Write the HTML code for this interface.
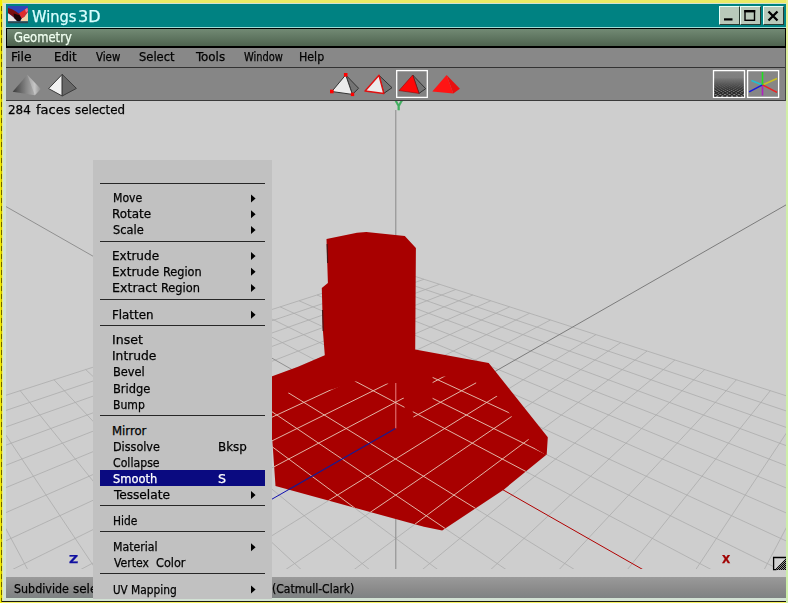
<!DOCTYPE html>
<html><head><meta charset="utf-8"><title>Wings 3D</title>
<style>
html,body{margin:0;padding:0}
body{width:788px;height:603px;overflow:hidden;position:relative;background:#f0f070;font-family:'DejaVu Sans Condensed','DejaVu Sans','Liberation Sans',sans-serif;font-size:13px;color:#000}
div,span,svg{position:absolute;box-sizing:border-box}
.g{left:0;top:0;width:0;height:0}
.t{-webkit-text-stroke:0.25px currentColor;white-space:nowrap;transform-origin:0 0;line-height:30px;height:30px}
#edgeL{left:0;top:0;width:2.4px;height:603px;background:#f6ee00}
#edgeLd{left:1.4px;top:6px;width:0.8px;height:596px;background:repeating-linear-gradient(#6b6400 0 5px,#c8c000 5px 8px)}
#edgeR{left:786px;top:0;width:2px;height:603px;background:linear-gradient(#eef08a 0,#e4f09a 30px,#d0eea8 120px,#cdeeaa)}
#edgeT{left:0;top:0;width:788px;height:2.5px;background:#eaeb66}
#edgeB{left:0;top:601.6px;width:788px;height:2px;background:#f4f060}
#frame{left:2.5px;top:2.5px;width:783.5px;height:598.5px;background:#d2e2d4}
#frameB{left:2px;top:600.6px;width:784px;height:1.2px;background:#1a1a10}
#title{left:6px;top:4px;width:780px;height:23px;background:#008282}
#titleline{left:6px;top:27px;width:780px;height:1px;background:#9fe0d8}
#geo{left:6px;top:28px;width:780px;height:19.5px;background:#000}
#geoin{left:1px;top:1px;width:778px;height:17px;background:linear-gradient(#728a74,#4e634f)}
#menubar{left:6px;top:47.5px;width:780px;height:19.5px;background:#888888}
#tbline{left:6px;top:67px;width:780px;height:1px;background:#333}
#toolbar{left:6px;top:68px;width:780px;height:32px;background:#868686}
#tbline2{left:6px;top:100px;width:780px;height:1px;background:#3a3a3a}
#redge{left:785px;top:47.5px;width:1px;height:53px;background:#444}
#viewport{left:6px;top:101px;width:780px;height:476px;background:#cecece}
#status{left:6px;top:577px;width:780px;height:21px;background:linear-gradient(#9a9a9a,#8a8a8a 60%,#7e8283)}
#popup{left:93px;top:160px;width:179px;height:439px;background:#c1c1c1;z-index:2}
.z3{z-index:3}
.t{z-index:4}
.u{z-index:1}
.sep{z-index:3;left:100px;width:164.5px;height:1.2px;background:#262626}
#hl{z-index:3;left:100px;top:469.5px;width:164.5px;height:16.5px;background:#0a0a80}
.btn{top:6px;height:18.5px;background:#b9c9ba;border-top:1.5px solid #e8fff8;border-left:1.5px solid #e8fff8;border-bottom:1.5px solid #2a3a30;border-right:1.5px solid #2a3a30}
.scene{left:0;top:0}
.wbox{border:1.3px solid #fff;top:70px;height:28px}
</style></head><body>

<div id="edgeT"></div><div id="edgeB"></div><div id="edgeL"></div><div id="edgeLd"></div><div id="edgeR"></div>
<div id="frame"></div><div id="frameB"></div>
<div id="title"></div><div id="titleline"></div>
<div id="geo"><div id="geoin"></div></div>
<div id="menubar"></div><div id="tbline"></div><div id="toolbar"></div><div id="tbline2"></div>
<div id="viewport"></div><div id="redge"></div>
<svg class="scene" width="788" height="603" viewBox="0 0 788 603">
<defs><clipPath id="vp"><rect x="6" y="101" width="780" height="468"/></clipPath><clipPath id="redclip"><polygon points="326.5,239.0 357.0,232.7 366.3,232.0 404.8,235.9 415.9,247.9 415.2,349.6 488.7,363.0 547.8,437.3 546.7,454.4 504.0,489.4 442.2,530.6 423.9,526.8 275.5,486.0 272.3,440.0 271.0,440.0 271.0,376.6 272.2,376.3 298.1,366.8 324.8,355.3 322.9,330.6 321.8,287.9 327.9,282.9"/></clipPath><clipPath id="wclip"><polygon points="271.0,403.0 288.5,392.5 332.0,389.5 356.0,381.2 388.0,383.5 404.5,398.5 404.5,409.0 412.8,414.0 412.8,410.0 432.6,399.8 432.6,376.5 445.0,376.5 476.0,382.0 497.0,396.0 512.0,417.0 529.0,440.0 536.0,449.0 546.0,455.0 504.0,489.4 442.2,530.6 423.9,526.8 275.5,486.0 271.0,440.0"/></clipPath></defs>
<g clip-path="url(#vp)" fill="none">
<line x1="394.8" y1="269.9" x2="-97.1" y2="428.5" stroke="#acacac" stroke-width="0.8"/>
<line x1="394.8" y1="269.9" x2="887.9" y2="428.5" stroke="#acacac" stroke-width="0.8"/>
<line x1="409.0" y1="274.5" x2="-91.2" y2="443.2" stroke="#acacac" stroke-width="0.8"/>
<line x1="380.6" y1="274.5" x2="882.1" y2="443.2" stroke="#acacac" stroke-width="0.8"/>
<line x1="423.9" y1="279.3" x2="-84.9" y2="459.0" stroke="#acacac" stroke-width="0.8"/>
<line x1="365.8" y1="279.3" x2="875.9" y2="459.0" stroke="#acacac" stroke-width="0.8"/>
<line x1="439.4" y1="284.3" x2="-78.0" y2="476.3" stroke="#acacac" stroke-width="0.8"/>
<line x1="350.3" y1="284.3" x2="869.1" y2="476.3" stroke="#acacac" stroke-width="0.8"/>
<line x1="455.7" y1="289.5" x2="-70.5" y2="495.1" stroke="#acacac" stroke-width="0.8"/>
<line x1="334.0" y1="289.5" x2="861.8" y2="495.1" stroke="#acacac" stroke-width="0.8"/>
<line x1="472.8" y1="295.0" x2="-62.2" y2="515.7" stroke="#acacac" stroke-width="0.8"/>
<line x1="317.0" y1="295.0" x2="853.7" y2="515.7" stroke="#acacac" stroke-width="0.8"/>
<line x1="490.7" y1="300.8" x2="-53.1" y2="538.4" stroke="#acacac" stroke-width="0.8"/>
<line x1="299.1" y1="300.8" x2="844.7" y2="538.4" stroke="#acacac" stroke-width="0.8"/>
<line x1="509.6" y1="306.9" x2="-43.1" y2="563.5" stroke="#acacac" stroke-width="0.8"/>
<line x1="280.2" y1="306.9" x2="834.9" y2="563.5" stroke="#acacac" stroke-width="0.8"/>
<line x1="529.5" y1="313.3" x2="-31.9" y2="591.5" stroke="#acacac" stroke-width="0.8"/>
<line x1="260.4" y1="313.3" x2="823.9" y2="591.5" stroke="#acacac" stroke-width="0.8"/>
<line x1="550.4" y1="320.0" x2="-19.4" y2="622.7" stroke="#acacac" stroke-width="0.8"/>
<line x1="239.5" y1="320.0" x2="811.7" y2="622.7" stroke="#acacac" stroke-width="0.8"/>
<line x1="596.0" y1="334.6" x2="10.7" y2="697.8" stroke="#acacac" stroke-width="0.8"/>
<line x1="194.1" y1="334.6" x2="782.2" y2="697.8" stroke="#acacac" stroke-width="0.8"/>
<line x1="620.7" y1="342.6" x2="29.0" y2="743.5" stroke="#acacac" stroke-width="0.8"/>
<line x1="169.4" y1="342.6" x2="764.2" y2="743.5" stroke="#acacac" stroke-width="0.8"/>
<line x1="647.0" y1="351.1" x2="50.1" y2="796.3" stroke="#acacac" stroke-width="0.8"/>
<line x1="143.2" y1="351.1" x2="743.5" y2="796.3" stroke="#acacac" stroke-width="0.8"/>
<line x1="674.9" y1="360.0" x2="74.8" y2="858.0" stroke="#acacac" stroke-width="0.8"/>
<line x1="115.3" y1="360.0" x2="719.3" y2="858.0" stroke="#acacac" stroke-width="0.8"/>
<line x1="704.7" y1="369.6" x2="104.0" y2="931.0" stroke="#acacac" stroke-width="0.8"/>
<line x1="85.7" y1="369.6" x2="690.6" y2="931.0" stroke="#acacac" stroke-width="0.8"/>
<line x1="736.4" y1="379.8" x2="139.2" y2="1019.0" stroke="#acacac" stroke-width="0.8"/>
<line x1="54.0" y1="379.8" x2="656.1" y2="1019.0" stroke="#acacac" stroke-width="0.8"/>
<line x1="770.3" y1="390.7" x2="182.3" y2="1126.7" stroke="#acacac" stroke-width="0.8"/>
<line x1="20.2" y1="390.7" x2="613.8" y2="1126.7" stroke="#acacac" stroke-width="0.8"/>
<line x1="806.7" y1="402.4" x2="236.5" y2="1261.9" stroke="#acacac" stroke-width="0.8"/>
<line x1="-16.1" y1="402.4" x2="560.7" y2="1261.9" stroke="#acacac" stroke-width="0.8"/>
<line x1="845.8" y1="415.0" x2="306.4" y2="1436.6" stroke="#acacac" stroke-width="0.8"/>
<line x1="-55.1" y1="415.0" x2="492.2" y2="1436.6" stroke="#acacac" stroke-width="0.8"/>
<line x1="887.9" y1="428.5" x2="400.2" y2="1670.9" stroke="#acacac" stroke-width="0.8"/>
<line x1="-97.1" y1="428.5" x2="400.2" y2="1670.9" stroke="#acacac" stroke-width="0.8"/>
<line x1="395.4" y1="428.5" x2="-50.5" y2="174.4" stroke="#909090" stroke-width="1"/>
<line x1="395.4" y1="428.5" x2="839.3" y2="174.4" stroke="#7c7c7c" stroke-width="1"/>
<line x1="395.8" y1="110.0" x2="395.8" y2="569.0" stroke="#8a8a8a" stroke-width="1"/>
<line x1="395.4" y1="428.5" x2="644.5" y2="570.5" stroke="#b00000" stroke-width="1"/>
<line x1="395.4" y1="428.5" x2="-154.9" y2="743.5" stroke="#1010b0" stroke-width="1"/>
<polygon points="326.5,239.0 357.0,232.7 366.3,232.0 404.8,235.9 415.9,247.9 415.2,349.6 488.7,363.0 547.8,437.3 546.7,454.4 504.0,489.4 442.2,530.6 423.9,526.8 275.5,486.0 272.3,440.0 271.0,440.0 271.0,376.6 272.2,376.3 298.1,366.8 324.8,355.3 322.9,330.6 321.8,287.9 327.9,282.9" fill="#a80000"/>
<line x1="327.2" y1="244.0" x2="327.6" y2="263.0" stroke="#4a1414" stroke-width="1.2"/>
<line x1="322.6" y1="310.0" x2="323.2" y2="331.0" stroke="#4a1414" stroke-width="1.2"/>
<line x1="395.8" y1="383.0" x2="395.8" y2="428.4" stroke="#e88080" stroke-width="1"/>
<g clip-path="url(#wclip)">
<line x1="394.8" y1="269.9" x2="-97.1" y2="428.5" stroke="#e8c8b8" stroke-width="0.9"/>
<line x1="394.8" y1="269.9" x2="887.9" y2="428.5" stroke="#e8c8b8" stroke-width="0.9"/>
<line x1="409.0" y1="274.5" x2="-91.2" y2="443.2" stroke="#e8c8b8" stroke-width="0.9"/>
<line x1="380.6" y1="274.5" x2="882.1" y2="443.2" stroke="#e8c8b8" stroke-width="0.9"/>
<line x1="423.9" y1="279.3" x2="-84.9" y2="459.0" stroke="#e8c8b8" stroke-width="0.9"/>
<line x1="365.8" y1="279.3" x2="875.9" y2="459.0" stroke="#e8c8b8" stroke-width="0.9"/>
<line x1="439.4" y1="284.3" x2="-78.0" y2="476.3" stroke="#e8c8b8" stroke-width="0.9"/>
<line x1="350.3" y1="284.3" x2="869.1" y2="476.3" stroke="#e8c8b8" stroke-width="0.9"/>
<line x1="455.7" y1="289.5" x2="-70.5" y2="495.1" stroke="#e8c8b8" stroke-width="0.9"/>
<line x1="334.0" y1="289.5" x2="861.8" y2="495.1" stroke="#e8c8b8" stroke-width="0.9"/>
<line x1="472.8" y1="295.0" x2="-62.2" y2="515.7" stroke="#e8c8b8" stroke-width="0.9"/>
<line x1="317.0" y1="295.0" x2="853.7" y2="515.7" stroke="#e8c8b8" stroke-width="0.9"/>
<line x1="490.7" y1="300.8" x2="-53.1" y2="538.4" stroke="#e8c8b8" stroke-width="0.9"/>
<line x1="299.1" y1="300.8" x2="844.7" y2="538.4" stroke="#e8c8b8" stroke-width="0.9"/>
<line x1="509.6" y1="306.9" x2="-43.1" y2="563.5" stroke="#e8c8b8" stroke-width="0.9"/>
<line x1="280.2" y1="306.9" x2="834.9" y2="563.5" stroke="#e8c8b8" stroke-width="0.9"/>
<line x1="529.5" y1="313.3" x2="-31.9" y2="591.5" stroke="#e8c8b8" stroke-width="0.9"/>
<line x1="260.4" y1="313.3" x2="823.9" y2="591.5" stroke="#e8c8b8" stroke-width="0.9"/>
<line x1="550.4" y1="320.0" x2="-19.4" y2="622.7" stroke="#e8c8b8" stroke-width="0.9"/>
<line x1="239.5" y1="320.0" x2="811.7" y2="622.7" stroke="#e8c8b8" stroke-width="0.9"/>
<line x1="596.0" y1="334.6" x2="10.7" y2="697.8" stroke="#e8c8b8" stroke-width="0.9"/>
<line x1="194.1" y1="334.6" x2="782.2" y2="697.8" stroke="#e8c8b8" stroke-width="0.9"/>
<line x1="620.7" y1="342.6" x2="29.0" y2="743.5" stroke="#e8c8b8" stroke-width="0.9"/>
<line x1="169.4" y1="342.6" x2="764.2" y2="743.5" stroke="#e8c8b8" stroke-width="0.9"/>
<line x1="647.0" y1="351.1" x2="50.1" y2="796.3" stroke="#e8c8b8" stroke-width="0.9"/>
<line x1="143.2" y1="351.1" x2="743.5" y2="796.3" stroke="#e8c8b8" stroke-width="0.9"/>
<line x1="674.9" y1="360.0" x2="74.8" y2="858.0" stroke="#e8c8b8" stroke-width="0.9"/>
<line x1="115.3" y1="360.0" x2="719.3" y2="858.0" stroke="#e8c8b8" stroke-width="0.9"/>
<line x1="704.7" y1="369.6" x2="104.0" y2="931.0" stroke="#e8c8b8" stroke-width="0.9"/>
<line x1="85.7" y1="369.6" x2="690.6" y2="931.0" stroke="#e8c8b8" stroke-width="0.9"/>
<line x1="736.4" y1="379.8" x2="139.2" y2="1019.0" stroke="#e8c8b8" stroke-width="0.9"/>
<line x1="54.0" y1="379.8" x2="656.1" y2="1019.0" stroke="#e8c8b8" stroke-width="0.9"/>
<line x1="770.3" y1="390.7" x2="182.3" y2="1126.7" stroke="#e8c8b8" stroke-width="0.9"/>
<line x1="20.2" y1="390.7" x2="613.8" y2="1126.7" stroke="#e8c8b8" stroke-width="0.9"/>
<line x1="806.7" y1="402.4" x2="236.5" y2="1261.9" stroke="#e8c8b8" stroke-width="0.9"/>
<line x1="-16.1" y1="402.4" x2="560.7" y2="1261.9" stroke="#e8c8b8" stroke-width="0.9"/>
<line x1="845.8" y1="415.0" x2="306.4" y2="1436.6" stroke="#e8c8b8" stroke-width="0.9"/>
<line x1="-55.1" y1="415.0" x2="492.2" y2="1436.6" stroke="#e8c8b8" stroke-width="0.9"/>
<line x1="887.9" y1="428.5" x2="400.2" y2="1670.9" stroke="#e8c8b8" stroke-width="0.9"/>
<line x1="-97.1" y1="428.5" x2="400.2" y2="1670.9" stroke="#e8c8b8" stroke-width="0.9"/>
<line x1="476.2" y1="382.8" x2="413.4" y2="417.0" stroke="#e8c8b8" stroke-width="0.9"/>
<line x1="395.4" y1="428.5" x2="-154.9" y2="743.5" stroke="#1a1a90" stroke-width="1.2"/>
</g>
</g>
</svg>
<div id="status"></div>
<div id="popup"></div>
<div class="sep" style="top:182.65px"></div>
<div class="sep" style="top:240.65px"></div>
<div class="sep" style="top:298.65px"></div>
<div class="sep" style="top:324.90px"></div>
<div class="sep" style="top:414.90px"></div>
<div class="sep" style="top:504.90px"></div>
<div class="sep" style="top:530.65px"></div>
<div class="sep" style="top:572.90px"></div>
<div id="hl"></div>
<div class="btn" style="left:719px;width:20.5px"></div>
<div class="btn" style="left:740px;width:20.5px"></div>
<div class="btn" style="left:763px;width:20.5px"></div>
<svg class="scene" width="788" height="603" viewBox="0 0 788 603">
<defs>
<linearGradient id="pg1" x1="0" y1="0" x2="1" y2="0"><stop offset="0" stop-color="#444"/><stop offset="0.5" stop-color="#9c9c9c"/><stop offset="0.78" stop-color="#c6c6c6"/><stop offset="1" stop-color="#8a8a8a"/></linearGradient>
<linearGradient id="gg" x1="0" y1="0" x2="0" y2="1"><stop offset="0" stop-color="#848484"/><stop offset="0.3" stop-color="#7e7e7e"/><stop offset="1" stop-color="#888"/></linearGradient>
<pattern id="hatch" width="4.4" height="3.2" patternUnits="userSpaceOnUse"><path d="M0 0L4.4 3.2M4.4 0L0 3.2" stroke="#1c1c1c" stroke-width="0.95"/></pattern>
<linearGradient id="hm" x1="0" y1="0" x2="0" y2="1"><stop offset="0" stop-color="#fff" stop-opacity="0"/><stop offset="0.25" stop-color="#fff" stop-opacity="0"/><stop offset="0.8" stop-color="#fff" stop-opacity="1"/></linearGradient>
<clipPath id="gclip"><rect x="714.2" y="71.3" width="29.6" height="25.4"/></clipPath><mask id="hmask"><rect x="714" y="71" width="30" height="26" fill="url(#hm)"/></mask>
</defs>
<!-- app icon -->
<g>
<rect x="8" y="6" width="20" height="17.2" fill="#2f45b8"/>
<polygon points="8,13 12,16 16,19.5 18,21.5 8,21.5" fill="#ece4e4"/>
<polygon points="28,12 28,21.5 20,21.5 22,18 24.5,16.5" fill="#f2d4a8"/>
<polygon points="8,8 12,9.2 16,11.6 20,14.5 19.5,20.8 16,19.2 12,15.8 8,13" fill="#7c0c10"/>
<polygon points="13.5,13.5 19.5,15.3 22,17.5 20,21.3 17,21.3 14.5,18.3" fill="#1a0408"/>
<polygon points="19,13.2 27.2,8 28,11.5 24.2,17 21.5,18.2" fill="#e02c2c"/>
<polygon points="25,9.4 27.4,7.8 28,11 26,12.5" fill="#ee7090"/>
<rect x="8" y="21.3" width="20" height="1.9" fill="#2c4a4c"/>
</g>
<!-- min / max / close glyphs -->
<rect x="724" y="18.3" width="8.5" height="2.2" fill="#000"/>
<rect x="745" y="10.8" width="9.5" height="9.5" fill="none" stroke="#000" stroke-width="1.4"/><rect x="744.3" y="10" width="10.9" height="2.4" fill="#000"/>
<path d="M768.5 11.5L777.5 20.5M777.5 11.5L768.5 20.5" stroke="#000" stroke-width="2.3"/>
<!-- toolbar pyramids -->
<polygon points="27.3,74.7 40.9,88.9 34.9,95.2 12.7,91.8" fill="url(#pg1)"/>
<polygon points="27.3,74.7 34.9,95.2 12.7,91.8" fill="#000" fill-opacity="0.12"/>
<polygon points="62.2,74.4 48.6,88.6 62.2,96" fill="#f2f2f2" stroke="#3c3c3c" stroke-width="1" stroke-linejoin="round"/>
<polygon points="62.2,74.4 76.4,88.4 62.2,96" fill="#686868" stroke="#3c3c3c" stroke-width="1" stroke-linejoin="round"/>
<!-- vertex -->
<polygon points="345.7,74.9 358.6,88.3 352.4,94.4" fill="#747474" stroke="#333" stroke-width="1" stroke-linejoin="round"/>
<polygon points="345.7,74.9 331.8,91.5 352.4,94.4" fill="#ebebeb" stroke="#333" stroke-width="1" stroke-linejoin="round"/>
<rect x="343.9" y="73" width="3.6" height="3.6" fill="#f00"/><rect x="330" y="89.7" width="3.6" height="3.6" fill="#f00"/><rect x="350.8" y="92.7" width="3.4" height="3.4" fill="#f00"/>
<!-- edge -->
<polygon points="379,75.3 392,87.7 383.8,93.4" fill="#747474" stroke="#333" stroke-width="1" stroke-linejoin="round"/>
<polygon points="379,75.3 365.1,91.1 383.8,93.4" fill="#ebebeb" stroke="#e01010" stroke-width="1.5" stroke-linejoin="round"/>
<!-- face -->
<rect x="396.7" y="70.6" width="30.6" height="26.8" fill="#828282" stroke="#fff" stroke-width="1.3"/>
<polygon points="412.7,75 425.7,88.7 419,93.4" fill="#747474" stroke="#333" stroke-width="1" stroke-linejoin="round"/>
<polygon points="412.7,75 399,90.6 419,93.4" fill="#ff0808" stroke="#801010" stroke-width="0.6" stroke-linejoin="round"/>
<!-- body -->
<polygon points="446.6,75 459.9,88.7 453.3,93.4" fill="#e81010"/>
<polygon points="446.6,75 432.3,91.5 453.3,93.4" fill="#ff1414"/>
<!-- right boxes -->
<rect x="713.5" y="70.6" width="31" height="26.8" fill="url(#gg)" stroke="#fff" stroke-width="1.3"/>
<g clip-path="url(#gclip)" mask="url(#hmask)" stroke="#262626" stroke-width="1.05"><line x1="695.3" y1="112.0" x2="685.0" y2="76.2"/><line x1="763.9" y1="112.0" x2="774.2" y2="76.2"/><line x1="702.4" y1="112.0" x2="687.1" y2="76.2"/><line x1="756.8" y1="112.0" x2="772.1" y2="76.2"/><line x1="709.6" y1="112.0" x2="689.1" y2="76.2"/><line x1="749.6" y1="112.0" x2="770.1" y2="76.2"/><line x1="716.7" y1="112.0" x2="691.1" y2="76.2"/><line x1="742.5" y1="112.0" x2="768.1" y2="76.2"/><line x1="723.8" y1="112.0" x2="693.1" y2="76.2"/><line x1="735.4" y1="112.0" x2="766.1" y2="76.2"/><line x1="731.0" y1="112.0" x2="695.2" y2="76.2"/><line x1="728.2" y1="112.0" x2="764.0" y2="76.2"/><line x1="738.1" y1="112.0" x2="697.2" y2="76.2"/><line x1="721.1" y1="112.0" x2="762.0" y2="76.2"/><line x1="745.3" y1="112.0" x2="699.2" y2="76.2"/><line x1="713.9" y1="112.0" x2="760.0" y2="76.2"/><line x1="752.4" y1="112.0" x2="701.2" y2="76.2"/><line x1="706.8" y1="112.0" x2="758.0" y2="76.2"/><line x1="759.5" y1="112.0" x2="703.2" y2="76.2"/><line x1="699.7" y1="112.0" x2="756.0" y2="76.2"/><line x1="766.7" y1="112.0" x2="705.3" y2="76.2"/><line x1="692.5" y1="112.0" x2="753.9" y2="76.2"/><line x1="773.8" y1="112.0" x2="707.3" y2="76.2"/><line x1="685.4" y1="112.0" x2="751.9" y2="76.2"/><line x1="781.0" y1="112.0" x2="709.3" y2="76.2"/><line x1="678.2" y1="112.0" x2="749.9" y2="76.2"/><line x1="788.1" y1="112.0" x2="711.3" y2="76.2"/><line x1="671.1" y1="112.0" x2="747.9" y2="76.2"/><line x1="795.3" y1="112.0" x2="713.3" y2="76.2"/><line x1="663.9" y1="112.0" x2="745.9" y2="76.2"/><line x1="802.4" y1="112.0" x2="715.4" y2="76.2"/><line x1="656.8" y1="112.0" x2="743.8" y2="76.2"/><line x1="809.5" y1="112.0" x2="717.4" y2="76.2"/><line x1="649.7" y1="112.0" x2="741.8" y2="76.2"/><line x1="816.7" y1="112.0" x2="719.4" y2="76.2"/><line x1="642.5" y1="112.0" x2="739.8" y2="76.2"/><line x1="823.8" y1="112.0" x2="721.4" y2="76.2"/><line x1="635.4" y1="112.0" x2="737.8" y2="76.2"/><line x1="831.0" y1="112.0" x2="723.5" y2="76.2"/><line x1="628.2" y1="112.0" x2="735.7" y2="76.2"/><line x1="838.1" y1="112.0" x2="725.5" y2="76.2"/><line x1="621.1" y1="112.0" x2="733.7" y2="76.2"/><line x1="845.2" y1="112.0" x2="727.5" y2="76.2"/><line x1="614.0" y1="112.0" x2="731.7" y2="76.2"/><line x1="852.4" y1="112.0" x2="729.5" y2="76.2"/><line x1="606.8" y1="112.0" x2="729.7" y2="76.2"/><line x1="859.5" y1="112.0" x2="731.5" y2="76.2"/><line x1="599.7" y1="112.0" x2="727.7" y2="76.2"/><line x1="866.7" y1="112.0" x2="733.6" y2="76.2"/><line x1="592.5" y1="112.0" x2="725.6" y2="76.2"/><line x1="873.8" y1="112.0" x2="735.6" y2="76.2"/><line x1="585.4" y1="112.0" x2="723.6" y2="76.2"/><line x1="880.9" y1="112.0" x2="737.6" y2="76.2"/><line x1="578.3" y1="112.0" x2="721.6" y2="76.2"/><line x1="888.1" y1="112.0" x2="739.6" y2="76.2"/><line x1="571.1" y1="112.0" x2="719.6" y2="76.2"/><line x1="895.2" y1="112.0" x2="741.6" y2="76.2"/><line x1="564.0" y1="112.0" x2="717.6" y2="76.2"/><line x1="902.4" y1="112.0" x2="743.7" y2="76.2"/><line x1="556.8" y1="112.0" x2="715.5" y2="76.2"/><line x1="909.5" y1="112.0" x2="745.7" y2="76.2"/><line x1="549.7" y1="112.0" x2="713.5" y2="76.2"/><line x1="916.6" y1="112.0" x2="747.7" y2="76.2"/><line x1="542.6" y1="112.0" x2="711.5" y2="76.2"/><line x1="923.8" y1="112.0" x2="749.7" y2="76.2"/><line x1="535.4" y1="112.0" x2="709.5" y2="76.2"/><line x1="930.9" y1="112.0" x2="751.8" y2="76.2"/><line x1="528.3" y1="112.0" x2="707.4" y2="76.2"/><line x1="938.1" y1="112.0" x2="753.8" y2="76.2"/><line x1="521.1" y1="112.0" x2="705.4" y2="76.2"/><line x1="945.2" y1="112.0" x2="755.8" y2="76.2"/><line x1="514.0" y1="112.0" x2="703.4" y2="76.2"/><line x1="952.4" y1="112.0" x2="757.8" y2="76.2"/><line x1="506.8" y1="112.0" x2="701.4" y2="76.2"/><line x1="959.5" y1="112.0" x2="759.8" y2="76.2"/><line x1="499.7" y1="112.0" x2="699.4" y2="76.2"/></g>
<rect x="747.6" y="70.6" width="31" height="26.8" fill="#868686" stroke="#fff" stroke-width="1.3"/>
<g stroke-width="1.6" stroke-linecap="butt">
<line x1="762.5" y1="84.9" x2="751.4" y2="80.4" stroke="#20c0d0"/>
<line x1="762.5" y1="84.9" x2="777" y2="78.5" stroke="#c8c020"/>
<line x1="762.5" y1="84.9" x2="762.5" y2="95.5" stroke="#b020c0"/>
<line x1="762.5" y1="84.9" x2="749.1" y2="91.9" stroke="#1818e0"/>
<line x1="762.5" y1="84.9" x2="777" y2="92.4" stroke="#f02020"/>
<line x1="762.5" y1="84.9" x2="762.5" y2="72" stroke="#20e020"/>
</g>
<!-- resize corner -->
<defs><pattern id="dith" width="2" height="2" patternUnits="userSpaceOnUse"><rect width="1" height="1" fill="#000"/><rect x="1" y="1" width="1" height="1" fill="#000"/></pattern></defs>
<rect x="773.4" y="557.4" width="12.6" height="12.4" fill="#d2d2d2"/>
<polygon points="786,558.2 786,570 774.6,570" fill="url(#dith)"/>
<polygon points="786,558.2 786,570 774.6,570" fill="#000" fill-opacity="0.3"/>
<path d="M786 557.5H773.6V569.6H776.5" stroke="#000" stroke-width="1.3" fill="none"/>
</svg>
<svg class="scene z3" width="788" height="603" viewBox="0 0 788 603"><polygon points="251,194.60 255.6,198.60 251,202.60" fill="#000"/><polygon points="251,210.35 255.6,214.35 251,218.35" fill="#000"/><polygon points="251,226.10 255.6,230.10 251,234.10" fill="#000"/><polygon points="251,252.10 255.6,256.10 251,260.10" fill="#000"/><polygon points="251,267.85 255.6,271.85 251,275.85" fill="#000"/><polygon points="251,284.10 255.6,288.10 251,292.10" fill="#000"/><polygon points="251,310.85 255.6,314.85 251,318.85" fill="#000"/><polygon points="251,491.10 255.6,495.10 251,499.10" fill="#000"/><polygon points="251,543.35 255.6,547.35 251,551.35" fill="#000"/><polygon points="251,585.60 255.6,589.60 251,593.60" fill="#000"/></svg>
<div class="g">
<span class="t" style="left:32.00px;top:2.00px;transform:scaleX(1.0512);color:#d8ffff;font-size:15.5px;">Wings</span>
<span class="t" style="left:78.00px;top:2.00px;transform:scaleX(1.1493);color:#d8ffff;font-size:15.5px;">3D</span>
</div>
<span class="t" style="left:14.00px;top:22.00px;transform:scaleX(0.9536);color:#f0fff0;font-size:13.5px;">Geometry</span>
<span class="t" style="left:11.00px;top:42.00px;transform:scaleX(1.0535);">File</span>
<span class="t" style="left:54.00px;top:42.00px;transform:scaleX(1.0024);">Edit</span>
<span class="t" style="left:96.00px;top:42.00px;transform:scaleX(0.8771);">View</span>
<span class="t" style="left:139.00px;top:42.00px;transform:scaleX(0.9857);">Select</span>
<span class="t" style="left:196.00px;top:42.00px;transform:scaleX(1.0179);">Tools</span>
<span class="t" style="left:244.00px;top:42.00px;transform:scaleX(0.8444);">Window</span>
<span class="t" style="left:299.00px;top:42.00px;transform:scaleX(0.9455);">Help</span>
<div class="g">
<span class="t" style="left:8.00px;top:95.00px;transform:scaleX(1.0238);">284</span>
<span class="t" style="left:36.00px;top:95.00px;transform:scaleX(1.1107);">faces</span>
<span class="t" style="left:75.00px;top:95.00px;transform:scaleX(1.0147);">selected</span>
</div>
<span class="t" style="left:113.00px;top:183.00px;transform:scaleX(0.9322);">Move</span>
<span class="t" style="left:112.00px;top:199.00px;transform:scaleX(1.0207);">Rotate</span>
<span class="t" style="left:113.00px;top:215.00px;transform:scaleX(0.9750);">Scale</span>
<span class="t" style="left:112.00px;top:241.00px;transform:scaleX(1.0284);">Extrude</span>
<div class="g">
<span class="t" style="left:112.00px;top:257.00px;transform:scaleX(1.0284);">Extrude</span>
<span class="t" style="left:163.00px;top:257.00px;transform:scaleX(0.9669);">Region</span>
</div>
<div class="g">
<span class="t" style="left:112.00px;top:273.00px;transform:scaleX(1.0802);">Extract</span>
<span class="t" style="left:161.00px;top:273.00px;transform:scaleX(0.9735);">Region</span>
</div>
<span class="t" style="left:112.00px;top:300.00px;transform:scaleX(1.0129);">Flatten</span>
<span class="t" style="left:112.00px;top:325.00px;transform:scaleX(1.0734);">Inset</span>
<span class="t" style="left:112.00px;top:341.00px;transform:scaleX(1.0494);">Intrude</span>
<span class="t" style="left:113.00px;top:357.00px;transform:scaleX(0.9752);">Bevel</span>
<span class="t" style="left:113.00px;top:374.00px;transform:scaleX(0.9793);">Bridge</span>
<span class="t" style="left:113.00px;top:390.00px;transform:scaleX(0.9302);">Bump</span>
<span class="t" style="left:112.00px;top:416.00px;transform:scaleX(1.0000);">Mirror</span>
<span class="t" style="left:113.00px;top:432.00px;transform:scaleX(0.9574);">Dissolve</span>
<span class="t" style="left:113.00px;top:448.00px;transform:scaleX(0.9378);">Collapse</span>
<span class="t" style="left:113.00px;top:464.00px;transform:scaleX(0.9827);color:#fff;">Smooth</span>
<span class="t" style="left:114.00px;top:480.00px;transform:scaleX(1.0425);">Tesselate</span>
<span class="t" style="left:113.00px;top:506.00px;transform:scaleX(0.9091);">Hide</span>
<span class="t" style="left:113.00px;top:532.00px;transform:scaleX(0.9392);">Material</span>
<div class="g">
<span class="t" style="left:114.00px;top:548.00px;transform:scaleX(0.9324);">Vertex</span>
<span class="t" style="left:156.00px;top:548.00px;transform:scaleX(0.9664);">Color</span>
</div>
<div class="g">
<span class="t" style="left:113.00px;top:575.00px;transform:scaleX(0.8871);">UV</span>
<span class="t" style="left:131.00px;top:575.00px;transform:scaleX(0.9115);">Mapping</span>
</div>
<span class="t" style="left:218.00px;top:432.00px;transform:scaleX(1.0189);">Bksp</span>
<span class="t" style="left:218.00px;top:464.00px;transform:scaleX(1.0833);color:#fff;">S</span>
<div class="g">
<span class="t u" style="left:14.00px;top:574.00px;transform:scaleX(0.9513);">Subdivide</span>
<span class="t u" style="left:73.00px;top:574.00px;transform:scaleX(1.0222);">sele</span>
<span class="t u" style="left:272.00px;top:574.00px;transform:scaleX(0.9280);">(Catmull-Clark)</span>
</div>
<span class="t" style="left:395.00px;top:91.00px;transform:scaleX(0.9500);color:#3fae5f;font-size:12px;font-weight:bold;">Y</span>
<span class="t" style="left:69.00px;top:545.00px;transform:scaleX(1.2800);color:#1010a0;font-size:11px;font-weight:bold;">Z</span>
<span class="t" style="left:722.00px;top:545.00px;transform:scaleX(1.0759);color:#a00000;font-size:11px;font-weight:bold;">X</span>
</body></html>
